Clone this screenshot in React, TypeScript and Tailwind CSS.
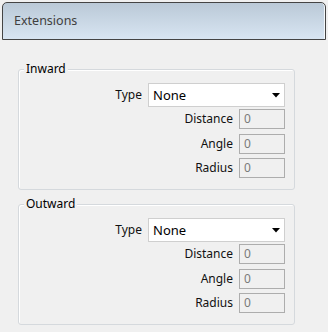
import React from "react";

const font = { fontFamily: '"Noto Sans", "Open Sans", sans-serif' };

function Field({ label }: { label: string }) {
  return (
    <div className="flex items-center justify-end gap-[6px]">
      <span className="text-[12px] leading-none text-[#111111]">{label}</span>
      <div className="flex h-[20px] w-[46px] items-center border border-[#adadad] bg-[#f0f0f0] pl-[4px] text-[12px] leading-none text-[#7a7a7a]">
        0
      </div>
    </div>
  );
}

function Group({ title, className }: { title: string; className?: string }) {
  return (
    <div
      className={
        "relative ml-[16px] h-[121px] w-[277px] rounded-[3px] border border-[#d5d9dd] shadow-[inset_1px_1px_0_#ffffff] pr-[9px] pt-[13px] " +
        (className ?? "")
      }
    >
      <span className="absolute left-[5px] top-[-9px] bg-[#f0f0f0] px-[2px] text-[12px] leading-[16px] text-black">
        {title}
      </span>
      <div className="flex items-center justify-end gap-[6px]">
        <span className="text-[12px] leading-none text-[#111111]">Type</span>
        <div className="relative flex h-[24px] w-[137px] items-center border border-[#cfcfcf] bg-white pl-[4px] text-[13px] leading-none text-black">
          None
          <svg
            className="absolute right-[4px] top-[9px]"
            width="8"
            height="5"
            viewBox="0 0 8 5"
          >
            <polygon points="0,0 8,0 4,4.5" fill="#000" />
          </svg>
        </div>
      </div>
      <div className="mt-[2px]">
        <Field label="Distance" />
      </div>
      <div className="mt-[5px]">
        <Field label="Angle" />
      </div>
      <div className="mt-[4px]">
        <Field label="Radius" />
      </div>
    </div>
  );
}

export default function App() {
  return (
    <div className="h-[332px] w-[328px] bg-[#f0f0f0] px-[2px] pt-[2px]" style={font}>
      <div className="flex h-[38px] items-center rounded-t-[5px] border border-[#444444] bg-linear-to-b from-[#bac9d7] to-[#d8e5f2] pl-[11px] shadow-[inset_-1px_0_0_#f4f8fb]">
        <span className="text-[12.5px] leading-none text-[#404040]">Extensions</span>
      </div>
      <Group title="Inward" className="mt-[29px]" />
      <Group title="Outward" className="mt-[14px]" />
    </div>
  );
}
